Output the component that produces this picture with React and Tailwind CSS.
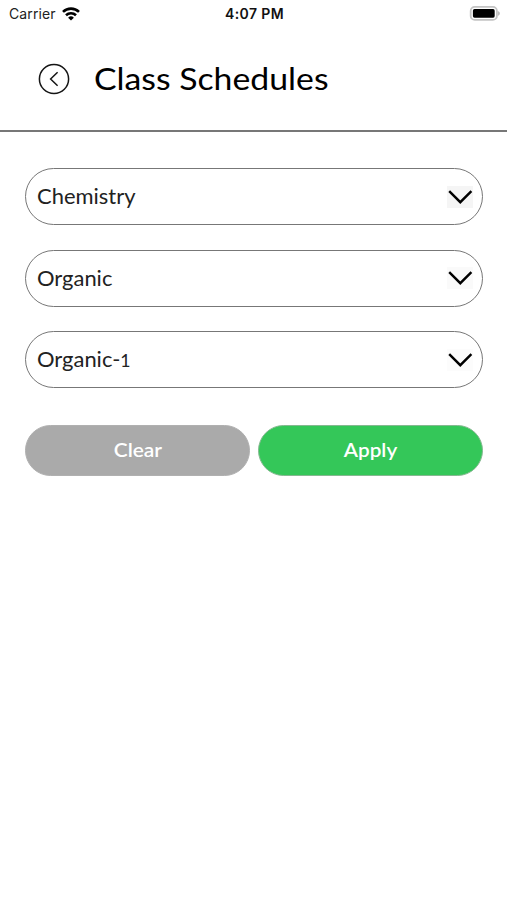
import { useState } from 'react';

const fields = [
  { id: 'subject', name: 'Chemistry', chip: 'bg-[#f5f5f5]' },
  { id: 'branch', name: 'Organic', chip: 'bg-[#fafafa]' },
  { id: 'batch', name: 'Organic-', number: '1', chip: 'bg-[#fcfcfc]' },
];

function StatusBar() {
  return (
    <div className="grid h-7 grid-cols-3 items-center pr-[7px] pb-px pl-[9px] font-['Inter',sans-serif] text-[14px] text-[#222]">
      <div className="flex items-center gap-[6px]">
        <span className="tracking-[0.1px]">Carrier</span>
        <svg width="18" height="14" viewBox="0 0 18 14" fill="none" stroke="#000" strokeWidth="2.6">
          <path d="M1 4.9a11.5 11.5 0 0 1 16 0" />
          <path d="M4 8.2a7.2 7.2 0 0 1 10 0" />
          <path d="M9 13.6 6.1 10.7a4.2 4.2 0 0 1 5.8 0z" fill="#000" stroke="none" />
        </svg>
      </div>
      <span className="text-center text-[14px] font-semibold tracking-[0.4px] text-[#111]">4:07 PM</span>
      <svg className="justify-self-end" width="31" height="16" viewBox="0 0 31 16">
        <rect x="1.7" y="0.9" width="26.2" height="13" rx="4" fill="#fff" stroke="#c4c4c4" strokeWidth="1.8" />
        <rect x="3.9" y="3.1" width="21.8" height="8.6" rx="1.6" fill="#000" />
        <path d="M28.8 5c2.8 1 2.8 3.8 0 4.8z" fill="#bdbdbd" />
      </svg>
    </div>
  );
}

function Select({ name, number, chip }) {
  return (
    <button className="flex h-[57px] w-full items-center justify-between rounded-full border border-[#777] pr-[9px] pl-[11px]">
      <span className="origin-left scale-x-[1.07] text-[20.5px] text-[#222]">
        {name}
        {number && <span className="text-[16.5px]">{number}</span>}
      </span>
      <span className={`flex h-[22px] w-[26px] items-center justify-center ${chip}`}>
        <svg width="26" height="22" viewBox="0 0 26 22" fill="none" stroke="#000" strokeWidth="2.4">
          <path d="M2.2 5.2 13.3 16.2 24.4 5.2" />
        </svg>
      </span>
    </button>
  );
}

export default function App() {
  const [values, setValues] = useState(fields);

  const clear = () => setValues(fields.map((f) => ({ ...f, name: '', number: '' })));

  return (
    <div className="h-[900px] w-full bg-white font-['Lato',sans-serif]">
      <StatusBar />
      <header className="flex h-[104px] items-center gap-6 border-b-2 border-[#777] pl-[38px]">
        <button aria-label="Back">
          <svg width="32" height="32" viewBox="0 0 32 32" fill="none" stroke="#151515" strokeWidth="1.5">
            <circle cx="16" cy="16" r="14.6" />
            <path d="M19.6 9.2 12.6 16l7 6.8" />
          </svg>
        </button>
        <h1 className="origin-left scale-x-[1.09] pb-px text-[31px] leading-none text-black">Class Schedules</h1>
      </header>

      <main className="pt-9 pr-6 pl-[25px]">
        <div className="flex flex-col gap-[24.5px]">
          {values.map((v) => (
            <Select key={v.id} name={v.name} number={v.number} chip={v.chip} />
          ))}
        </div>
        <div className="mt-[37px] flex gap-2 text-[19px] font-semibold text-white">
          <button className="h-[51px] flex-1 rounded-full border border-[#b0b0b0] bg-[#aaa]" onClick={clear}>
            <span className="inline-block scale-x-[1.1]">Clear</span>
          </button>
          <button className="h-[51px] flex-1 rounded-full border border-[#85b890] bg-[#34c759]">
            <span className="inline-block scale-x-[1.09]">Apply</span>
          </button>
        </div>
      </main>
    </div>
  );
}
